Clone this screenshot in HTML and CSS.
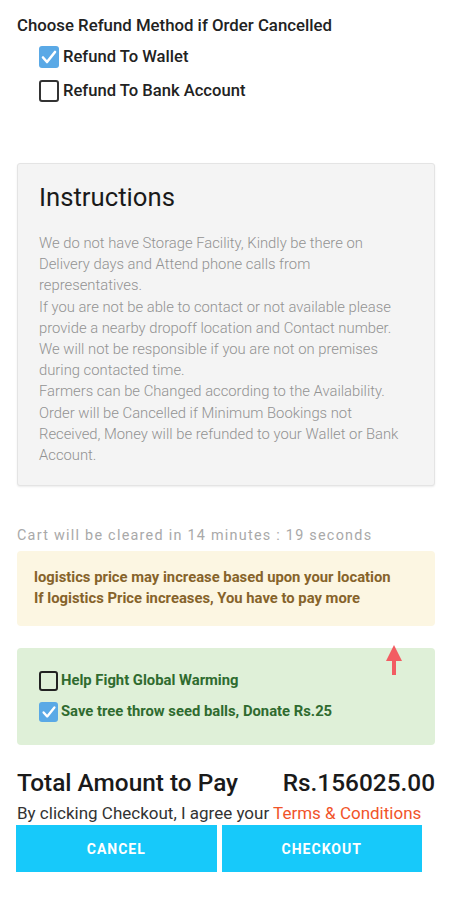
FILE: index.html
```html
<!DOCTYPE html>
<html lang="en">
<head>
    <meta charset="UTF-8">
    <meta name="viewport" content="width=device-width, initial-scale=1.0">
    <title>Checkout</title>
    <link rel="stylesheet" href="styles.css">
</head>
<body>
    <div class="refund">
        <p class="refund-title">Choose Refund Method if Order Cancelled</p>
        <label class="check-row">
            <span class="box checked"><svg viewBox="0 0 20 20" width="20" height="20"><path d="M4 10.5l4 4.5 8-10" fill="none" stroke="#fff" stroke-width="2.6" stroke-linecap="round" stroke-linejoin="round"/></svg></span>
            Refund To Wallet
        </label>
        <label class="check-row">
            <span class="box"></span>
            Refund To Bank Account
        </label>
    </div>

    <div class="instructions">
        <h2>Instructions</h2>
        <p>We do not have Storage Facility, Kindly be there on Delivery days and Attend phone calls from representatives.<br>
        If you are not be able to contact or not available please provide a nearby dropoff location and Contact number.<br>
        We will not be responsible if you are not on premises during contacted time.<br>
        Farmers can be Changed according to the Availability.<br>
        Order will be Cancelled if Minimum Bookings not Received, Money will be refunded to your Wallet or Bank Account.</p>
    </div>

    <p class="timer">Cart will be cleared in 14 minutes : 19 seconds</p>

    <div class="alert warning">
        logistics price may increase based upon your location<br>
        If logistics Price increases, You have to pay more
    </div>

    <div class="alert success">
        <svg class="arrow" viewBox="0 0 18 30" width="18" height="30"><path d="M9 0L1 16h6v14h4V16h6z" fill="#f25c62"/></svg>
        <label class="check-row small">
            <span class="box"></span>
            Help Fight Global Warming
        </label>
        <label class="check-row small">
            <span class="box checked"><svg viewBox="0 0 20 20" width="18" height="18"><path d="M4 10.5l4 4.5 8-10" fill="none" stroke="#fff" stroke-width="2.6" stroke-linecap="round" stroke-linejoin="round"/></svg></span>
            Save tree throw seed balls, Donate Rs.25
        </label>
    </div>

    <div class="total">
        <span>Total Amount to Pay</span>
        <span>Rs.156025.00</span>
    </div>
    <p class="terms">By clicking Checkout, I agree your <a href="#">Terms &amp; Conditions</a></p>
    <div class="actions">
        <button class="btn">CANCEL</button>
        <button class="btn">CHECKOUT</button>
    </div>
</body>
</html>
```

FILE: styles.css
```css
body {
    margin: 0;
    padding: 15px 15px 0 17px;
    font-family: Roboto, "Liberation Sans", sans-serif;
    color: #222;
    background: #fff;
}
p {
    margin: 0;
}
.refund-title {
    font-size: 16.8px;
    font-weight: 500;
    line-height: 20px;
}
.check-row {
    display: flex;
    align-items: center;
    gap: 4px;
    margin: 10px 0 0 22px;
    height: 23px;
    font-size: 16.6px;
    font-weight: 500;
}
.check-row + .check-row {
    margin-top: 11px;
}
.box {
    width: 16px;
    height: 18px;
    border: 2px solid #333;
    border-radius: 3px;
    display: flex;
    align-items: center;
    justify-content: center;
}
.box.checked {
    width: 20px;
    height: 22px;
    border: none;
    background: #5aa9e6;
}
.instructions {
    margin-top: 61px;
    height: 323px;
    box-sizing: border-box;
    padding: 19px 26px 0 21px;
    background: #f4f4f4;
    border: 1px solid #e4e4e4;
    border-radius: 3px;
    box-shadow: 0 1px 2px rgba(0, 0, 0, 0.08);
}
.instructions h2 {
    margin: 0;
    font-size: 25.7px;
    font-weight: 400;
    line-height: 28px;
    color: #1a1a1a;
}
.instructions p {
    margin-top: 22px;
    font-size: 14.8px;
    font-weight: 300;
    line-height: 21.2px;
    color: #929292;
}
.timer {
    margin-top: 40px;
    font-size: 14.4px;
    letter-spacing: 1.25px;
    line-height: 20px;
    color: #a9a9a9;
}
.alert {
    border-radius: 4px;
    font-size: 14.8px;
    font-weight: 700;
    line-height: 21px;
}
.warning {
    margin-top: 5px;
    height: 75px;
    box-sizing: border-box;
    padding: 16px 17px;
    background: #fcf6e2;
    color: #86632a;
}
.success {
    position: relative;
    margin-top: 22px;
    height: 97px;
    box-sizing: border-box;
    padding: 13px 0 0 0;
    background: #dff0d8;
    color: #2f6b2f;
}
.check-row.small {
    margin: 8px 0 0 22px;
    gap: 3px;
    font-size: 14.8px;
    font-weight: 700;
}
.check-row.small .box {
    width: 15px;
    height: 16px;
    border-color: #222;
}
.check-row.small .box.checked {
    width: 19px;
    height: 20px;
}
.arrow {
    position: absolute;
    top: -3px;
    right: 32px;
}
.total {
    display: flex;
    justify-content: space-between;
    margin-top: 25px;
    font-size: 24.4px;
    font-weight: 500;
    line-height: 26px;
    color: #1a1a1a;
}
.terms {
    margin-top: 7px;
    font-size: 17px;
    line-height: 20px;
    color: #333;
}
.terms a {
    color: #f1542a;
    text-decoration: none;
}
.actions {
    display: flex;
    gap: 5px;
    margin-top: 2px;
    width: 406px;
    margin-left: -1px;
}
.btn {
    flex: 1;
    height: 47px;
    border: none;
    background: #17c9fa;
    color: #fff;
    font-family: Roboto, "Liberation Sans", sans-serif;
    font-size: 14px;
    font-weight: 700;
    letter-spacing: 1px;
}
```
